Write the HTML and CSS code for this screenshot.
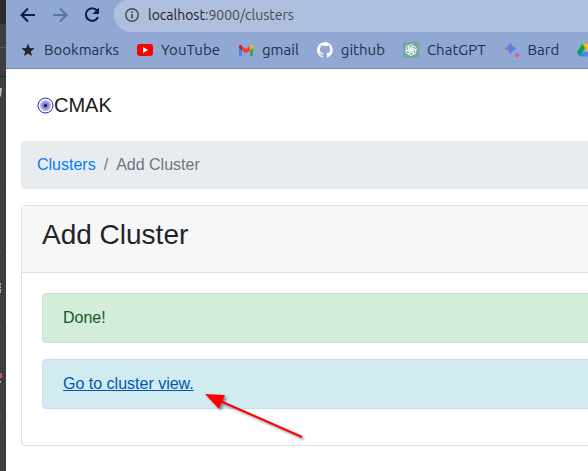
FILE: index.html
```html
<!DOCTYPE html>
<html lang="en">
<head>
<meta charset="utf-8">
<title>CMAK</title>
<link rel="stylesheet" href="styles.css">
</head>
<body>
<div class="desktop">
  <div class="editor-edge" aria-hidden="true">
    <svg width="6" height="471" viewBox="0 0 6 471">
      <path fill="#2b2b2b" d="M0 0h6v23H0z"/>
      <path fill="#292b2c" d="M0 23h6v1H0zM0 76h6v1H0z"/>
      <path fill="#56595b" d="M0 47h6v1H0z"/>
      <path fill="#b9bcbe" d="M0 88h2l-1 8-1 1z"/>
      <path fill="#a34d35" d="M0 252h1v1H0zM0 326h1v1H0z"/>
      <path fill="#a5a8aa" d="M0 283h1v2H0zM0 286h1v2H0zM0 289h1v4H0zM0 381h1v2H0z"/>
      <path fill="#d6534d" d="M0 373h1l1 1v3l-1 1H0z"/>
      <path fill="#74413c" d="M0 189h1v1H0zM0 412h1v3H0zM0 417h1v3H0zM0 440h1v1H0z"/>
    </svg>
  </div>
  <div class="browser">
    <header class="chrome">
      <div class="toolbar">
        <button class="tool" type="button" aria-label="Back"><svg width="16" height="16" viewBox="0 0 16 16" fill="none" stroke="#051f4c" stroke-width="2"><path d="M15 8H2M8 1.500L1.500 8 8 14.500"/></svg></button>
        <button class="tool" type="button" aria-label="Forward"><svg width="16" height="16" viewBox="0 0 16 16" fill="none" stroke="#5874a3" stroke-width="2"><path d="M1 8h13M8 1.500L14.500 8 8 14.500"/></svg></button>
        <button class="tool" type="button" aria-label="Reload"><svg width="16" height="16" viewBox="0 0 16 16"><path d="M13 3.500A6.300 6.300 0 1 0 14 10" fill="none" stroke="#051f4c" stroke-width="2"/><path d="M15 .5V7H8.500z" fill="#051f4c"/></svg></button>
        <div class="address">
          <svg width="14" height="14" viewBox="0 0 14 14" fill="none" stroke="#45474a"><circle cx="7" cy="7" r="6.200" stroke-width="1.400"/><path d="M7 6v4.500M7 3.300v1.600" stroke-width="1.600"/></svg>
          <span class="url"><span class="host">localhost</span>:9000/clusters</span>
        </div>
      </div>
      <nav class="bookmarks" aria-label="Bookmarks">
        <a href="#"><svg width="16" height="16" viewBox="0 0 16 16"><path fill="#25282b" d="M8 1.500l1.800 4.400 4.700.4-3.600 3.100 1.100 4.600L8 11.500 4 14l1.100-4.600-3.600-3.100 4.700-.4z"/></svg>Bookmarks</a>
        <a href="#"><svg width="16" height="16" viewBox="0 0 16 16"><rect y="2" width="16" height="12" rx="3" fill="#f00"/><path fill="#fff" d="M6 5l5 3-5 3z"/></svg>YouTube</a>
        <a href="#"><svg width="16" height="16" viewBox="0 0 16 16"><path fill="#4285f4" d="M1 5l3 2v7H2q-1 0-1-1z"/><path fill="#34a853" d="M12 7l3-2v8q0 1-1 1h-2z"/><path fill="#fbbc04" d="M12 4l1.200-1Q15 2.500 15 4.500V6l-3 2.500z"/><path fill="#c5221f" d="M1 6V4.500Q1 2.500 2.800 3L4 4v4.500z"/><path fill="#ea4335" d="M4 4l4 3 4-3v4.500l-4 3-4-3z"/></svg>gmail</a>
        <a href="#"><svg width="16" height="16" viewBox="0 0 16 16"><path fill="#fff" d="M8 0a8 8 0 0 0-2.530 15.590c.4.070.55-.17.550-.38v-1.490C3.800 14.200 3.330 12.650 3.330 12.650c-.36-.92-.89-1.170-.89-1.170-.73-.5.050-.49.050-.49.810.060 1.230.83 1.230.83.720 1.230 1.880.87 2.340.67.070-.52.280-.87.510-1.070-1.780-.2-3.640-.89-3.640-3.950 0-.87.310-1.590.82-2.150-.08-.2-.36-1.020.08-2.120 0 0 .67-.21 2.200.82a7.600 7.600 0 0 1 4 0c1.530-1.040 2.200-.82 2.200-.82.440 1.100.16 1.920.08 2.120.51.560.82 1.270.82 2.150 0 3.070-1.870 3.750-3.650 3.950.29.250.54.730.54 1.480v2.200c0 .21.150.46.550.38A8 8 0 0 0 8 0z"/></svg>github</a>
        <a href="#"><svg width="16" height="16" viewBox="0 0 16 16"><rect width="16" height="16" rx="2" fill="#74aa9c"/><g fill="none" stroke="#fff" stroke-width=".9"><path id="petal" d="M6 8V4.800a2.400 2.400 0 0 1 4.500-1L7.500 5.600V9"/><use href="#petal" transform="rotate(60 8 8)"/><use href="#petal" transform="rotate(120 8 8)"/><use href="#petal" transform="rotate(180 8 8)"/><use href="#petal" transform="rotate(240 8 8)"/><use href="#petal" transform="rotate(300 8 8)"/></g></svg>ChatGPT</a>
        <a href="#"><svg width="16" height="16" viewBox="0 0 16 16"><defs><linearGradient id="spark"><stop stop-color="#ef5860"/><stop offset=".5" stop-color="#657ddd"/><stop offset="1" stop-color="#1aa3ed"/></linearGradient><linearGradient id="glint"><stop stop-color="#e85b78"/><stop offset="1" stop-color="#a46ab8"/></linearGradient></defs><path fill="url(#spark)" d="M6.500 0Q8 5 13 6.500 8 8 6.500 13 5 8 0 6.500 5 5 6.500 0z"/><path fill="url(#glint)" d="M13 10q.8 2.200 3 3-2.200.8-3 3-.8-2.200-3-3 2.200-.8 3-3z"/></svg>Bard</a>
        <a href="#" aria-label="Drive"><svg width="16" height="16" viewBox="0 0 16 16"><path fill="#0f9d58" d="M5.500 1.500L8 6l-5.500 8.500L0 10z"/><path fill="#ffba00" d="M5.500 1.500h5L16 10h-5z"/><path fill="#4285f4" d="M5 10h11l-2.500 4.500h-11z"/></svg></a>
      </nav>
    </header>
    <main class="page">
      <nav class="navbar">
        <a class="brand" href="#"><svg width="17" height="17" viewBox="0 0 17 17"><circle cx="8.500" cy="8.500" r="7.500" fill="#fff" stroke="#20209b"/><circle cx="8.500" cy="8.500" r="5.500" fill="#b5b5df"/><circle cx="8.500" cy="8.500" r="3.500" fill="#8585cd"/><circle cx="8.500" cy="8.500" r="1.600" fill="#080878"/></svg>CMAK</a>
      </nav>
      <ol class="breadcrumb">
        <li><a href="#">Clusters</a></li>
        <li class="active">Add Cluster</li>
      </ol>
      <section class="card">
        <div class="card-header"><h1>Add Cluster</h1></div>
        <div class="card-body">
          <div class="alert success">Done!</div>
          <div class="alert info"><a href="#">Go to cluster view.</a>
            <svg class="pointer" width="112" height="60" viewBox="0 0 112 60" aria-hidden="true"><g><path d="M18 13l84 37" stroke="#f00" stroke-width="2"/><path fill="#f00" d="M5 7l20 1-6 14z"/></g></svg>
          </div>
        </div>
      </section>
    </main>
  </div>
</div>
</body>
</html>
```
FILE: styles.css
```css
* { box-sizing: border-box; }

body {
  margin: 0;
  overflow: hidden;
  background: #fff;
  color: #212529;
  font: 16px/24px "Liberation Sans", Arial, sans-serif;
}

.desktop { display: flex; min-height: 100vh; }
.editor-edge { flex: none; width: 6px; background: #3c3f41; }
.editor-edge svg { display: block; }
.browser { flex: 1; min-width: 0; overflow: hidden; }

.chrome {
  background: #91a8d2;
  border-bottom: 1px solid #6c8abb;
  font-family: Ubuntu, "Noto Sans", sans-serif;
}
.toolbar { display: flex; height: 32px; padding-left: 14px; gap: 16px; }
.tool {
  display: flex;
  align-items: center;
  width: 16px;
  height: 30px;
  padding: 0;
  border: 0;
  background: none;
}
.tool svg, .address svg, .bookmarks svg { flex: none; }
.address {
  display: flex;
  flex: 1;
  align-items: center;
  gap: 9px;
  margin-left: -2px;
  padding: 0 11px 2px;
  border-radius: 14px 0 0 18px;
  background: #afc0de;
  font-size: 14px;
}
.url { color: #474b51; }
.host { color: #1f2124; }

.bookmarks {
  display: flex;
  align-items: center;
  gap: 18px;
  height: 36px;
  padding-left: 14px;
  font-size: 15px;
}
.bookmarks a {
  display: flex;
  flex: none;
  align-items: center;
  gap: 8px;
  color: #1d304f;
  text-decoration: none;
}

/* The page is wider than the visible part of the window. */
.page { margin-right: -40px; padding: 16px 0 16px 15px; }
.navbar { padding: 5px 16px; margin-bottom: 16px; line-height: 30px; }
.brand {
  display: flex;
  align-items: center;
  color: #1a1a1a;
  font-size: 20px;
  text-decoration: none;
}

.breadcrumb {
  display: flex;
  margin: 0 0 16px;
  padding: 12px 16px;
  border-radius: 4px;
  background: #e9ecef;
  list-style: none;
}
.breadcrumb a { color: #007bff; text-decoration: none; }
.active { color: #6c757d; }
.active::before { content: "/"; padding: 0 8px; }

.card { border: 1px solid #dfdfdf; border-radius: 4px; }
.card-header {
  padding: 12px 20px 20px;
  border-bottom: 1px solid #dfdfdf;
  background: #f7f7f7;
}
h1 { margin: 0; font-size: 28px; font-weight: 400; line-height: 34px; }
.card-body { padding: 20px 20px 36px; }
.alert {
  position: relative;
  padding: 12px 20px;
  border: 1px solid;
  border-radius: 4px;
}
.alert + .alert { margin-top: 16px; }
.success { border-color: #c3e6cb; background: #d4edda; color: #155724; }
.info { border-color: #bee5eb; background: #d1ecf1; }
.info a { color: #0056b3; }
.pointer {
  position: absolute;
  top: 27px;
  left: 157px;
  filter: drop-shadow(2px 2px 1px rgba(0, 0, 0, .4));
}
```
